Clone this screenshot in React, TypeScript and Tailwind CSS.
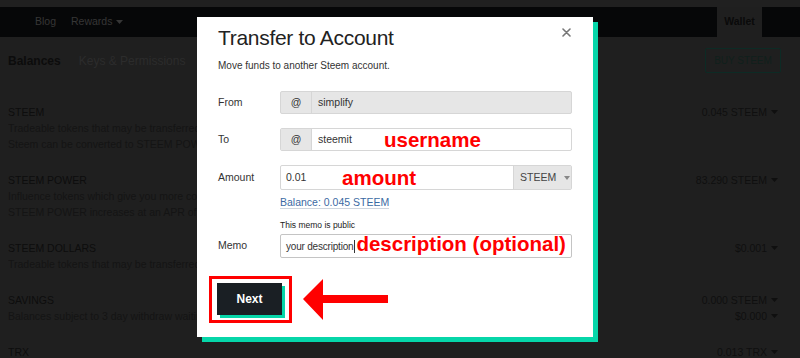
import React from "react";

const rows = [
  {
    title: "STEEM",
    lines: [
      "Tradeable tokens that may be transferred anywhere at anytime.",
      "Steem can be converted to STEEM POWER in a process called powering up.",
    ],
    values: ["0.045 STEEM"],
  },
  {
    title: "STEEM POWER",
    lines: [
      "Influence tokens which give you more control over post payouts and allow you to earn on curation rewards.",
      "STEEM POWER increases at an APR of approximately 3.09%, subject to blockchain variance.",
    ],
    values: ["83.290 STEEM"],
  },
  {
    title: "STEEM DOLLARS",
    lines: ["Tradeable tokens that may be transferred anywhere at anytime."],
    values: ["$0.001"],
  },
  {
    title: "SAVINGS",
    lines: ["Balances subject to 3 day withdraw waiting period."],
    values: ["0.000 STEEM", "$0.000"],
  },
  { title: "TRX", lines: [], values: ["0.013 TRX"] },
];

function Caret({ color }: { color: string }) {
  return (
    <svg width="7" height="4" viewBox="0 0 7 4" className="ml-[4px]" aria-hidden="true">
      <path d="M0 0h7L3.5 4z" fill={color} />
    </svg>
  );
}

function Wallet() {
  return (
    <div className="h-[358px] overflow-hidden bg-[#1f1f1f] font-['Liberation_Sans',Arial,sans-serif]">
      <div className="h-[7px] bg-[#202020]" />
      <nav className="flex h-[30px] items-center bg-[#060708] text-[10.5px] text-[#363636]">
        <span className="ml-[35px]">Blog</span>
        <span className="ml-[15px] flex items-center">
          Rewards
          <Caret color="#363636" />
        </span>
        <div className="ml-auto mr-[38px] flex h-full w-[45px] items-center justify-center bg-[#1f1f1f] text-[10.5px] font-bold text-[#0a0a0a]">
          Wallet
        </div>
      </nav>

      <div className="mt-[11px] flex h-[25px] items-center pl-[8px] pr-[19px]">
        <span className="text-[12px] font-bold text-[#0c0c0c]">Balances</span>
        <span className="ml-[18px] text-[12px] text-[#2c2c2c]">Keys &amp; Permissions</span>
        <div className="ml-auto flex h-full w-[76px] items-center justify-center rounded-[2px] border border-[#0d2b25] text-[10px] text-[#10201c]">
          BUY STEEM
        </div>
      </div>

      <div className="mt-[21px] flex flex-col pl-[8px] pr-[22px]">
        {rows.map((r) => (
          <div key={r.title} className="flex py-[10px] text-[10.5px] leading-[16px]">
            <div className="min-w-0 flex-1 overflow-hidden whitespace-nowrap">
              <div className="text-[#0d0d0d]">{r.title}</div>
              {r.lines.map((l) => (
                <div key={l} className="text-[#141414]">
                  {l}
                </div>
              ))}
            </div>
            <div className="flex flex-col items-end text-[#0f0f0f]">
              {r.values.map((v) => (
                <div key={v} className="flex items-center">
                  {v}
                  <Caret color="#0f0f0f" />
                </div>
              ))}
            </div>
          </div>
        ))}
      </div>
    </div>
  );
}

function Note({ children }: { children: React.ReactNode }) {
  return (
    <span className="whitespace-nowrap text-[20.5px] font-bold leading-[20px] text-[#ff0000]">{children}</span>
  );
}

function TransferModal() {
  return (
    <div className="absolute left-[197px] top-[17px] h-[320px] w-[396px] bg-white px-[21px] pt-[9px] font-['Liberation_Sans',Arial,sans-serif] text-[#333] shadow-[5px_5px_0_0_#06d6a9]">
      <button className="absolute right-[22px] top-[11px]" aria-label="Close">
        <svg width="9" height="9" viewBox="0 0 9 9" aria-hidden="true">
          <path d="M1 1l7 7M8 1L1 8" stroke="#777" strokeWidth="1.6" strokeLinecap="round" />
        </svg>
      </button>

      <h2 className="text-[21px] leading-[24px] tracking-[-0.3px] text-[#222]">Transfer to Account</h2>
      <p className="mt-[9px] text-[10px] leading-[14px]">Move funds to another Steem account.</p>

      <div className="mt-[18px] flex h-[23px] items-center">
        <span className="w-[62px] text-[10.5px]">From</span>
        <div className="flex h-full flex-1 rounded-[2px] border border-[#d6d6d6] bg-[#e6e6e6] text-[10.5px]">
          <span className="flex w-[31px] items-center justify-center border-r border-[#d6d6d6]">@</span>
          <span className="flex items-center pl-[6px]">simplify</span>
        </div>
      </div>

      <div className="mt-[14px] flex h-[23px] items-center">
        <span className="w-[62px] text-[10.5px]">To</span>
        <div className="flex h-full flex-1 rounded-[2px] border border-[#d6d6d6] text-[10.5px]">
          <span className="flex w-[31px] items-center justify-center border-r border-[#d6d6d6] bg-[#e6e6e6]">@</span>
          <span className="flex items-center pl-[6px]">
            <span className="w-[66px]">steemit</span>
            <Note>username</Note>
          </span>
        </div>
      </div>

      <div className="mt-[14px] flex h-[25px] items-center">
        <span className="w-[62px] text-[10.5px]">Amount</span>
        <div className="flex h-full flex-1 rounded-[2px] border border-[#d6d6d6] text-[10.5px]">
          <span className="flex flex-1 items-center pl-[5px]">
            <span className="w-[56px]">0.01</span>
            <Note>amount</Note>
          </span>
          <span className="flex w-[58px] items-center border-l border-[#d6d6d6] bg-[#e6e6e6] pl-[6px] text-[#444]">
            STEEM
            <svg width="6" height="4" viewBox="0 0 6 4" className="ml-[8px]" aria-hidden="true">
              <path d="M0 0h6L3 4z" fill="#888" />
            </svg>
          </span>
        </div>
      </div>

      <div className="ml-[62px] mt-[6px] flex">
        <span className="border-b border-[#cfd6df] text-[10.5px] leading-[12px] text-[#3b6aa3]">
          Balance: 0.045 STEEM
        </span>
      </div>

      <p className="ml-[62px] mt-[11px] text-[8.5px] leading-[11px] text-[#222]">This memo is public</p>

      <div className="mt-[3px] flex h-[24px] items-center">
        <span className="w-[62px] text-[10.5px]">Memo</span>
        <div className="flex h-full flex-1 items-center rounded-[2px] border border-[#c4c4c4] pl-[5px]">
          <span className="text-[10px] tracking-[-0.2px]">your description</span>
          <span className="ml-[1px] h-[13px] w-px bg-[#333]" />
          <span className="ml-[1px]">
            <Note>description (optional)</Note>
          </span>
        </div>
      </div>

      <div className="-ml-[9px] mt-[18px] flex items-center">
        <div className="border-[3px] border-[#ff0000] pb-[5px] pl-[5px] pr-[7px] pt-[4px]">
          <button className="flex h-[32px] w-[65px] items-center justify-center bg-[#1a1f24] text-[12px] font-bold text-white shadow-[3px_3px_0_0_#06d6a9]">
            Next
          </button>
        </div>
        <svg width="85" height="42" viewBox="0 0 85 42" className="ml-[11px]" aria-hidden="true">
          <polygon points="0,20 20,0 20,16 85,16 85,24 20,24 20,41" fill="#ff0000" />
        </svg>
      </div>
    </div>
  );
}

export default function App() {
  return (
    <div className="relative h-[358px] w-[800px] overflow-hidden">
      <Wallet />
      <TransferModal />
    </div>
  );
}
